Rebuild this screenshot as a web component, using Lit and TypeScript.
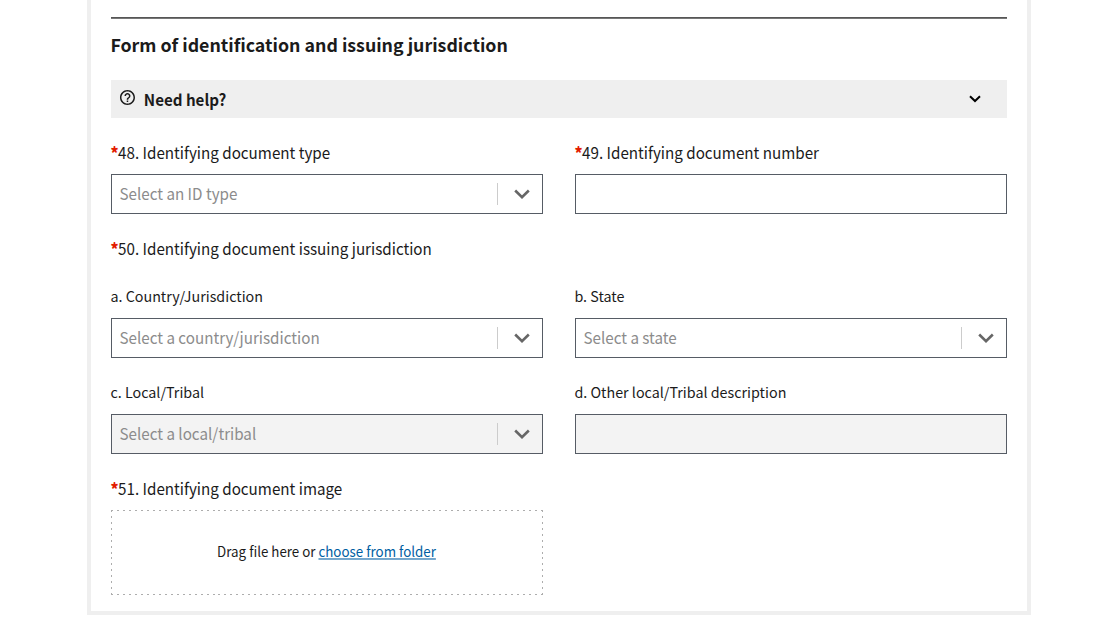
import { LitElement, html, css, nothing } from "lit";
import { customElement, property } from "lit/decorators.js";

@customElement("form-field")
class FormField extends LitElement {
  @property() label = "";
  @property() placeholder = "";
  @property({ type: Boolean }) required = false;
  @property({ type: Boolean }) sub = false;
  @property({ type: Boolean }) select = false;
  @property({ type: Boolean }) disabled = false;

  static styles = css`
    :host { display: block; min-width: 0; }
    .label { display: block; height: 24px; line-height: 24px; font-size: 15.2px; white-space: nowrap; margin: 0 0 10px -0.6px; transform: scaleY(1.06); }
    .label.sub { font-size: 14.32px; transform: none; }
    .star { color: #e31c00; font-weight: 900; margin-right: -0.4px; }
    .box { box-sizing: border-box; height: 40px; border: 1px solid #565c65; background: #fff; display: flex; align-items: center; }
    .box.disabled { background: #f3f3f3; }
    .hint { flex: 1; padding-left: 7.5px; margin-bottom: 2px; font-size: 15.2px; line-height: 36px; color: #8c8c8c; white-space: nowrap; transform: scaleY(1.06); }
    .divider { width: 1px; height: 22px; background: #ccc; }
    .arrow { display: block; width: 16px; height: 10px; margin: 0 12px 0 16px; }
  `;

  render() {
    return html`
      <label class="label ${this.sub ? "sub" : ""}">${this.required ? html`<span class="star">*</span>` : nothing}<span>${this.label}</span></label>
      <div class="box ${this.disabled ? "disabled" : ""}">
        ${this.select
          ? html`<span class="hint">${this.placeholder}</span><span class="divider"></span>
              <svg class="arrow" viewBox="0 0 16 10"><path d="M1.2 1.5 8 8.1 14.8 1.5" fill="none" stroke="#666" stroke-width="2.6" /></svg>`
          : nothing}
      </div>
    `;
  }
}

@customElement("app-root")
class AppRoot extends LitElement {
  static styles = css`
    :host { display: block; height: 622px; background: #fff; color: #1b1b1b; font-family: "Noto Sans CJK JP", "Noto Sans", sans-serif; }
    .card { box-sizing: border-box; width: 944px; height: 615px; margin-left: 87px; padding: 17px 20px 0; border: 4px solid #efefef; border-top: 0; }
    .rule { height: 1px; background: #565656; border-bottom: 1px solid #777; }
    .title { margin: 10px 0 21px -0.6px; height: 30px; line-height: 30px; font-size: 17.8px; font-weight: 700; white-space: nowrap; }
    .help { height: 38px; background: #efefef; display: flex; align-items: center; padding: 0 26px 0 8px; }
    .question { width: 18px; height: 18px; margin: 0 6.8px 3px 0; }
    .help-text { flex: 1; font-size: 15.15px; line-height: 38px; font-weight: 700; transform: scaleY(1.06); }
    .chevron { width: 12px; height: 8px; }
    .grid { display: grid; grid-template-columns: 432px 432px; column-gap: 32px; row-gap: 22px; }
    .first { margin-top: 22px; }
    .legend { margin: 22px 0 24px -0.6px; height: 24px; line-height: 24px; font-size: 15.2px; transform: scaleY(1.06); }
    .star { color: #e31c00; font-weight: 900; margin-right: -0.4px; }
    .upload-label { margin: 22px 0 0 -0.6px; height: 24px; line-height: 24px; font-size: 15.2px; transform: scaleY(1.06); }
    .drop {
      box-sizing: border-box; margin-top: 10px; padding: 0 1px 3px 0; width: 432px; height: 85px;
      display: flex; align-items: center; justify-content: center; font-size: 13.35px; white-space: pre;
      --across: repeating-linear-gradient(90deg, #adadad 0 2px, transparent 2px 5.972px);
      --down: repeating-linear-gradient(180deg, #adadad 0 2px, transparent 2px 5.929px);
      background: var(--across) 0 0 / 100% 1px no-repeat, var(--across) 0 100% / 100% 1px no-repeat,
        var(--down) 0 0 / 1px 100% no-repeat, var(--down) 100% 0 / 1px 100% no-repeat;
    }
    .drop-text { transform: scaleY(1.07); }
    .link { color: #005ea2; text-decoration: underline; }
  `;

  render() {
    return html`
      <main class="card">
        <div class="rule"></div>
        <h3 class="title">Form of identification and issuing jurisdiction</h3>
        <div class="help">
          <svg class="question" viewBox="0.7 0.6 24 24"><path fill="#1b1b1b" d="M11 18h2v-2h-2v2zm1-16C6.48 2 2 6.48 2 12s4.48 10 10 10 10-4.48 10-10S17.52 2 12 2zm0 18c-4.41 0-8-3.59-8-8s3.59-8 8-8 8 3.59 8 8-3.59 8-8 8zm0-14c-2.21 0-4 1.79-4 4h2c0-1.1.9-2 2-2s2 .9 2 2c0 2-3 1.75-3 5h2c0-2.25 3-2.5 3-5 0-2.21-1.79-4-4-4z" /></svg>
          <span class="help-text">Need help?</span>
          <svg class="chevron" viewBox="0 0 12 8"><path d="M1 1.2 6 6 11 1.2" fill="none" stroke="#000" stroke-width="2" /></svg>
        </div>
        <div class="grid first">
          <form-field required select label="48. Identifying document type" placeholder="Select an ID type"></form-field>
          <form-field required label="49. Identifying document number"></form-field>
        </div>
        <div class="legend"><span class="star">*</span><span>50. Identifying document issuing jurisdiction</span></div>
        <div class="grid">
          <form-field sub select label="a. Country/Jurisdiction" placeholder="Select a country/jurisdiction"></form-field>
          <form-field sub select label="b. State" placeholder="Select a state"></form-field>
          <form-field sub select disabled label="c. Local/Tribal" placeholder="Select a local/tribal"></form-field>
          <form-field sub disabled label="d. Other local/Tribal description"></form-field>
        </div>
        <div class="upload-label"><span class="star">*</span><span>51. Identifying document image</span></div>
        <div class="drop"><div class="drop-text"><span>Drag file here or </span><span class="link">choose from folder</span></div></div>
      </main>
    `;
  }
}
